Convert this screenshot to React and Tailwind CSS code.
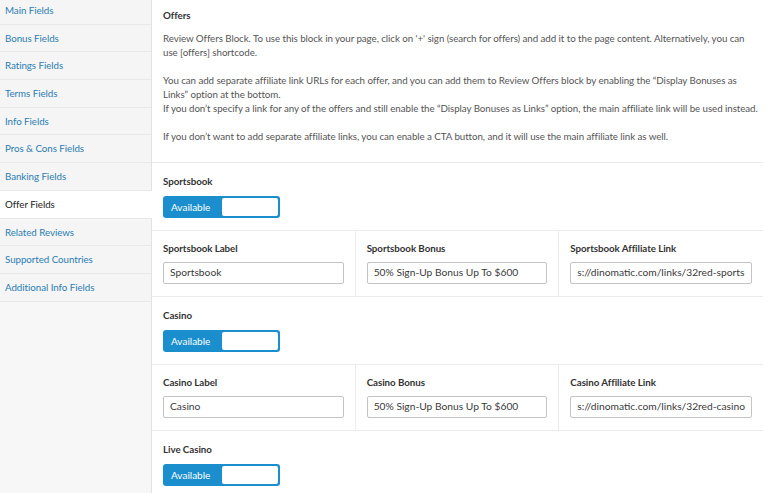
import React from "react";

const navItems = [
  "Main Fields",
  "Bonus Fields",
  "Ratings Fields",
  "Terms Fields",
  "Info Fields",
  "Pros & Cons Fields",
  "Banking Fields",
  "Offer Fields",
  "Related Reviews",
  "Supported Countries",
  "Additional Info Fields",
];

function Toggle() {
  return (
    <div className="mt-[8px] flex h-[22px] w-[117px] items-center rounded-[3px] bg-[#1b8fcd] p-[2px]">
      <div className="flex-1 pl-[6px] text-[10px] leading-none text-white">Available</div>
      <div className="h-[18px] w-[56px] rounded-[2px] bg-white" />
    </div>
  );
}

function ToggleSection({ label }) {
  return (
    <div className="border-b border-[#ececec] px-[11px] pt-[11px] pb-[12px]">
      <div className="text-[9.75px] font-bold leading-[14px] tracking-[-0.05px] text-[#333]">{label}</div>
      <Toggle />
    </div>
  );
}

function Field({ label, value, last }) {
  return (
    <div className={"min-w-0 px-[11px] pt-[10px] pb-[12px] " + (last ? "" : "border-r border-[#ececec]")}>
      <div className="text-[9.75px] font-bold leading-[14px] tracking-[-0.05px] text-[#333]">{label}</div>
      <div className="mt-[7px] flex h-[22px] items-center overflow-hidden whitespace-nowrap rounded-[2px] border border-[#c4c4c4] bg-white px-[6px] text-[10.25px] text-[#3a3a3a]">
        {value}
      </div>
    </div>
  );
}

function FieldRow({ fields }) {
  return (
    <div className="grid grid-cols-3 border-b border-[#ececec]">
      {fields.map((f, i) => (
        <Field key={i} label={f[0]} value={f[1]} last={i === fields.length - 1} />
      ))}
    </div>
  );
}

export default function App() {
  return (
    <div
      className="flex h-[493px] w-[768px] overflow-hidden bg-white"
      style={{ fontFamily: 'Lato, "Noto Sans", sans-serif' }}
    >
      <div className="flex w-[152px] shrink-0 flex-col border-r border-[#e2e2e2] bg-[#f7f7f7]">
        <div className="-mt-[3px] flex flex-col">
          {navItems.map((item) => {
            const active = item === "Offer Fields";
            return (
              <div
                key={item}
                className={
                  "flex h-[27.7px] shrink-0 items-center border-b border-[#e8e8e8] pl-[5px] text-[9.75px] tracking-[-0.05px] " +
                  (active
                    ? "-mr-px bg-white text-[#222]"
                    : "bg-[#f5f5f5] text-[#2a7db3]")
                }
              >
                {item}
              </div>
            );
          })}
        </div>
      </div>
      <div className="mr-[5px] min-w-0 flex-1">
        <div className="border-b border-[#ececec] pl-[11px] pr-[2px] pt-[8px] pb-[19px] text-[9.75px] leading-[14px] tracking-[-0.06px] text-[#555]">
          <div className="font-bold text-[#333]">Offers</div>
          <p className="mt-[9px]">
            Review Offers Block. To use this block in your page, click on '+' sign (search for offers) and add it to the page content. Alternatively, you can
            <br />
            use [offers] shortcode.
          </p>
          <p className="mt-[14px]">
            You can add separate affiliate link URLs for each offer, and you can add them to Review Offers block by enabling the “Display Bonuses as
            <br />
            Links” option at the bottom.
            <br />
            If you don’t specify a link for any of the offers and still enable the “Display Bonuses as Links” option, the main affiliate link will be used instead.
          </p>
          <p className="mt-[14px]">
            If you don’t want to add separate affiliate links, you can enable a CTA button, and it will use the main affiliate link as well.
          </p>
        </div>
        <ToggleSection label="Sportsbook" />
        <FieldRow
          fields={[
            ["Sportsbook Label", "Sportsbook"],
            ["Sportsbook Bonus", "50% Sign-Up Bonus Up To $600"],
            ["Sportsbook Affiliate Link", "s://dinomatic.com/links/32red-sports"],
          ]}
        />
        <ToggleSection label="Casino" />
        <FieldRow
          fields={[
            ["Casino Label", "Casino"],
            ["Casino Bonus", "50% Sign-Up Bonus Up To $600"],
            ["Casino Affiliate Link", "s://dinomatic.com/links/32red-casino"],
          ]}
        />
        <ToggleSection label="Live Casino" />
      </div>
    </div>
  );
}
